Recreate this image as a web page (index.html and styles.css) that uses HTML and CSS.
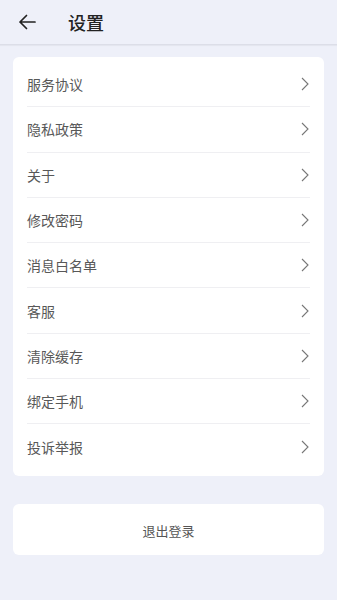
FILE: index.html
```html
<!DOCTYPE html>
<html lang="zh">
<head>
<meta charset="utf-8">
<link rel="stylesheet" href="styles.css">
</head>
<body>
<header class="topbar">
  <svg class="back" width="18" height="16" viewBox="0 0 18 16"><path d="M17 8H2M8.5 1.5L2 8l6.5 6.5" fill="none" stroke="#222" stroke-width="1.7" stroke-linecap="round" stroke-linejoin="round"/></svg>
  <h1 class="title">设置</h1>
</header>
<main class="content">
  <ul class="card list">
    <li class="row"><span>服务协议</span><svg class="chev" width="8" height="14" viewBox="0 0 8 14"><path d="M1 1l6 6-6 6" fill="none" stroke="#777" stroke-width="1.1"/></svg></li>
    <li class="row"><span>隐私政策</span><svg class="chev" width="8" height="14" viewBox="0 0 8 14"><path d="M1 1l6 6-6 6" fill="none" stroke="#777" stroke-width="1.1"/></svg></li>
    <li class="row"><span>关于</span><svg class="chev" width="8" height="14" viewBox="0 0 8 14"><path d="M1 1l6 6-6 6" fill="none" stroke="#777" stroke-width="1.1"/></svg></li>
    <li class="row"><span>修改密码</span><svg class="chev" width="8" height="14" viewBox="0 0 8 14"><path d="M1 1l6 6-6 6" fill="none" stroke="#777" stroke-width="1.1"/></svg></li>
    <li class="row"><span>消息白名单</span><svg class="chev" width="8" height="14" viewBox="0 0 8 14"><path d="M1 1l6 6-6 6" fill="none" stroke="#777" stroke-width="1.1"/></svg></li>
    <li class="row"><span>客服</span><svg class="chev" width="8" height="14" viewBox="0 0 8 14"><path d="M1 1l6 6-6 6" fill="none" stroke="#777" stroke-width="1.1"/></svg></li>
    <li class="row"><span>清除缓存</span><svg class="chev" width="8" height="14" viewBox="0 0 8 14"><path d="M1 1l6 6-6 6" fill="none" stroke="#777" stroke-width="1.1"/></svg></li>
    <li class="row"><span>绑定手机</span><svg class="chev" width="8" height="14" viewBox="0 0 8 14"><path d="M1 1l6 6-6 6" fill="none" stroke="#777" stroke-width="1.1"/></svg></li>
    <li class="row"><span>投诉举报</span><svg class="chev" width="8" height="14" viewBox="0 0 8 14"><path d="M1 1l6 6-6 6" fill="none" stroke="#777" stroke-width="1.1"/></svg></li>
  </ul>
  <div class="card logout">退出登录</div>
</main>
</body>
</html>
```
FILE: styles.css
```css
* { box-sizing: border-box; }
html, body { margin: 0; padding: 0; }
body {
  background: #eef0f9;
  font-family: "Noto Sans CJK SC", "Noto Sans", sans-serif;
  width: 337px;
  height: 600px;
  overflow: hidden;
}
.topbar {
  height: 45px;
  display: flex;
  align-items: center;
  padding-left: 18px;
  border-bottom: 1px solid #dcdee8;
  box-shadow: 0 1px 1px rgba(0,0,0,0.04);
}
.back { display: block; }
.title {
  margin: 0 0 0 32px;
  font-size: 18px;
  font-weight: 500;
  color: #222;
  line-height: 1;
}
.content {
  padding: 12px 13px 0;
}
.card {
  background: #fff;
  border-radius: 6px;
}
.list {
  list-style: none;
  margin: 0;
  padding: 5px 14px 6px;
}
.row {
  height: 45.3px;
  display: flex;
  align-items: center;
  justify-content: space-between;
  font-size: 14px;
  color: #585858;
  border-bottom: 1px solid #efeff2;
  padding-right: 1px;
}
.row:last-child { border-bottom: none; }
.chev { display: block; }
.logout {
  margin-top: 28px;
  height: 51px;
  display: flex;
  align-items: center;
  justify-content: center;
  padding-top: 3px;
  font-size: 13px;
  color: #555;
}
```
